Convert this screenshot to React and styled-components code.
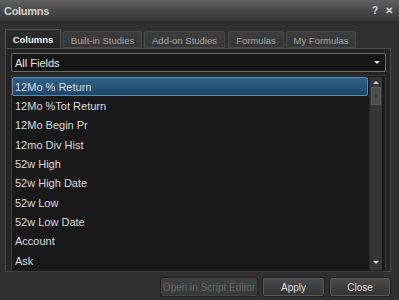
import React from "react";
import styled, { createGlobalStyle } from "styled-components";

const Global = createGlobalStyle`
  html, body { margin: 0; padding: 0; background: #2e2e2e; }
  * { box-sizing: border-box; }
`;

const Window = styled.div`
  width: 399px;
  height: 300px;
  background: #2f2f2f;
  display: flex;
  flex-direction: column;
  font-family: "Liberation Sans", Arial, sans-serif;
  overflow: hidden;
`;

const TitleBar = styled.div`
  height: 22px;
  flex: none;
  display: flex;
  align-items: center;
  justify-content: space-between;
  padding: 0 6px 0 4px;
  background: linear-gradient(#616161, #4a4a4a 45%, #383838);
  border-bottom: 1px solid #2a2a2a;
`;

const Title = styled.div`
  color: #d2d2d2;
  font-size: 11px;
  font-weight: bold;
  letter-spacing: -0.3px;
`;

const TitleIcons = styled.div`
  display: flex;
  gap: 7px;
  color: #d8d8d8;
  font-size: 10px;
  font-weight: bold;
`;

const Body = styled.div`
  padding: 8px 8px 0 5px;
  display: flex;
  flex-direction: column;
`;

const TabRow = styled.div`
  display: flex;
  align-items: flex-end;
  gap: 2px;
  height: 18px;
  position: relative;
  z-index: 1;
`;

const Tab = styled.div`
  width: ${(p) => p.$w}px;
  height: ${(p) => (p.$active ? 19 : 17)}px;
  margin-right: ${(p) => p.$mr || 0}px;
  display: flex;
  align-items: center;
  justify-content: center;
  font-size: 9.5px;
  color: ${(p) => (p.$active ? "#f0f0f0" : "#a8a8a8")};
  font-weight: ${(p) => (p.$active ? "bold" : "normal")};
  background: ${(p) =>
    p.$active ? "linear-gradient(#2c2c2c, #232323)" : "linear-gradient(#3d3d3d, #353535)"};
  border: 1px solid ${(p) => (p.$active ? "#555" : "#4a4a4a")};
  border-bottom: ${(p) => (p.$active ? "none" : "1px solid #4a4a4a")};
  border-radius: 2px 2px 0 0;
  padding-top: ${(p) => (p.$active ? 0 : 1)}px;
`;

const Panel = styled.div`
  height: 224px;
  background: #232323;
  border: 1px solid #4a4a4a;
  padding: 4px 4px 3px 5px;
  display: flex;
  flex-direction: column;
  gap: 3px;
`;

const Dropdown = styled.div`
  height: 19px;
  flex: none;
  background: #151515;
  border: 1px solid #6a6a6a;
  border-radius: 2px;
  display: flex;
  align-items: center;
  justify-content: space-between;
  padding: 0 5px 0 3px;
  color: #e6e6e6;
  font-size: 11px;
`;

const Arrow = styled.div`
  width: 0;
  height: 0;
  border-left: 3px solid transparent;
  border-right: 3px solid transparent;
  border-top: 3px solid #e0e0e0;
`;

const ListBox = styled.div`
  flex: 1;
  display: flex;
  background: #191919;
  border: 1px solid #3c3c3c;
  padding: 1px 3px 1px 0;
`;

const Items = styled.div`
  flex: 1;
  display: flex;
  flex-direction: column;
`;

const Item = styled.div`
  height: 19.33px;
  flex: none;
  display: flex;
  align-items: center;
  padding-left: 2px;
  color: #dcdcdc;
  font-size: 11px;
  border: 1px solid ${(p) => (p.$sel ? "#5f8bb3" : "transparent")};
  border-radius: 2px;
  background: ${(p) => (p.$sel ? "linear-gradient(#2f6189, #1f4566)" : "transparent")};
`;

const Scroll = styled.div`
  width: 13px;
  flex: none;
  margin-left: 1px;
  background: #353535;
  border-left: 1px solid #2a2a2a;
  display: flex;
  flex-direction: column;
  align-items: center;
  padding-top: 4px;
`;

const UpArrow = styled.div`
  width: 0;
  height: 0;
  border-left: 3px solid transparent;
  border-right: 3px solid transparent;
  border-bottom: 3px solid #cfcfcf;
`;

const DownArrow = styled.div`
  width: 0;
  height: 0;
  border-left: 3px solid transparent;
  border-right: 3px solid transparent;
  border-top: 3px solid #cfcfcf;
  margin-top: auto;
  margin-bottom: 6px;
`;

const Thumb = styled.div`
  width: 10px;
  height: 18px;
  margin-top: 3px;
  background: #4e4e4e;
  border: 1px solid #5a5a5a;
  display: flex;
  align-items: center;
  justify-content: center;
  &::after {
    content: "";
    width: 4px;
    height: 4px;
    background: #3c3c3c;
  }
`;

const Footer = styled.div`
  display: flex;
  justify-content: flex-end;
  gap: 6px;
  padding: 6px 9px 0 0;
`;

const Button = styled.button`
  width: ${(p) => p.$w}px;
  height: 18px;
  padding: 0;
  border: 1px solid ${(p) => (p.$disabled ? "#454545" : "#5a5a5a")};
  border-radius: 2px;
  background: ${(p) =>
    p.$disabled ? "linear-gradient(#404040, #383838)" : "linear-gradient(#4a4a4a, #343434)"};
  color: ${(p) => (p.$disabled ? "#6a6a6a" : "#dedede")};
  font-family: "Liberation Sans", Arial, sans-serif;
  font-size: 10px;
  box-shadow: 0 0 0 1px #1e1e1e;
`;

const items = [
  "12Mo % Return",
  "12Mo %Tot Return",
  "12Mo Begin Pr",
  "12mo Div Hist",
  "52w High",
  "52w High Date",
  "52w Low",
  "52w Low Date",
  "Account",
  "Ask",
];

export default function App() {
  return (
    <>
      <Global />
      <Window>
        <TitleBar>
          <Title>Columns</Title>
          <TitleIcons>
            <span>?</span>
            <span>✕</span>
          </TitleIcons>
        </TitleBar>
        <Body>
          <TabRow>
            <Tab $active $w={56}>Columns</Tab>
            <Tab $w={79}>Built-in Studies</Tab>
            <Tab $w={81} $mr={1}>Add-on Studies</Tab>
            <Tab $w={56}>Formulas</Tab>
            <Tab $w={70}>My Formulas</Tab>
          </TabRow>
          <Panel>
            <Dropdown>
              <span>All Fields</span>
              <Arrow />
            </Dropdown>
            <ListBox>
              <Items>
                {items.map((t, i) => (
                  <Item key={t} $sel={i === 0}>
                    {t}
                  </Item>
                ))}
              </Items>
              <Scroll>
                <UpArrow />
                <Thumb />
                <DownArrow />
              </Scroll>
            </ListBox>
          </Panel>
        </Body>
        <Footer>
          <Button $disabled $w={96}>Open in Script Editor</Button>
          <Button $w={61}>Apply</Button>
          <Button $w={60}>Close</Button>
        </Footer>
      </Window>
    </>
  );
}
